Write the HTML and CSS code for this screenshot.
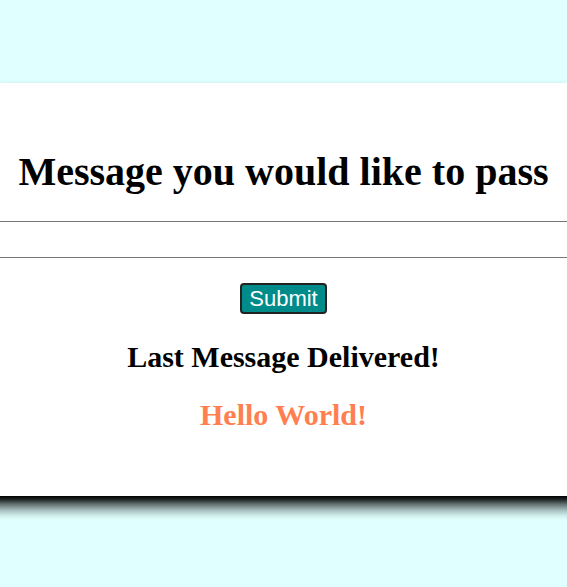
FILE: index.html
```html
<!DOCTYPE html>
<html>
<head>
<meta charset="utf-8">
<link rel="stylesheet" href="styles.css">
</head>
<body>
<div class="card">
  <h1 class="title">Message you would like to pass</h1>
  <input class="msg" type="text">
  <div class="actions"><button class="submit">Submit</button></div>
  <h2 class="label">Last Message Delivered!</h2>
  <h2 class="last">Hello World!</h2>
</div>
</body>
</html>
```

FILE: styles.css
```css
html, body {
  margin: 0;
  padding: 0;
  background: #e0ffff;
  font-family: "Liberation Serif", "Times New Roman", serif;
}
body {
  padding-top: 83px;
  height: 587px;
  box-sizing: border-box;
  overflow: hidden;
}
.card {
  position: relative;
  background: #fff;
  box-shadow: 0 -1px 3px rgba(0, 0, 0, 0.06);
  height: 413px;
  box-sizing: border-box;
  padding-top: 66px;
  text-align: center;
}
.card::after {
  content: "";
  position: absolute;
  left: 0;
  right: 0;
  top: 100%;
  height: 24px;
  background: linear-gradient(to bottom,
    rgba(0, 0, 0, 1) 0%,
    rgba(0, 0, 0, 0.85) 15%,
    rgba(0, 0, 0, 0.55) 35%,
    rgba(0, 0, 0, 0.25) 60%,
    rgba(0, 0, 0, 0.07) 82%,
    rgba(0, 0, 0, 0) 100%);
}
.title {
  margin: 0;
  font-size: 40px;
  font-weight: bold;
  line-height: 46px;
}
.msg {
  display: block;
  width: 100%;
  box-sizing: border-box;
  margin: 26px 0 0;
  height: 37px;
  border: none;
  border-top: 1px solid #767676;
  border-bottom: 1px solid #767676;
  background: #fff;
}
.actions {
  margin-top: 25px;
}
.submit {
  background: #008b8b;
  color: #fff;
  font-family: "Liberation Sans", Arial, sans-serif;
  font-size: 22px;
  border: 2px solid #222;
  border-radius: 4px;
  padding: 0 7px;
  height: 31px;
  line-height: 27px;
}
.label {
  margin: 26px 0 0;
  font-size: 30px;
  line-height: 34px;
}
.last {
  margin: 24px 0 0;
  font-size: 30px;
  line-height: 34px;
  color: #ff7f50;
}
```
